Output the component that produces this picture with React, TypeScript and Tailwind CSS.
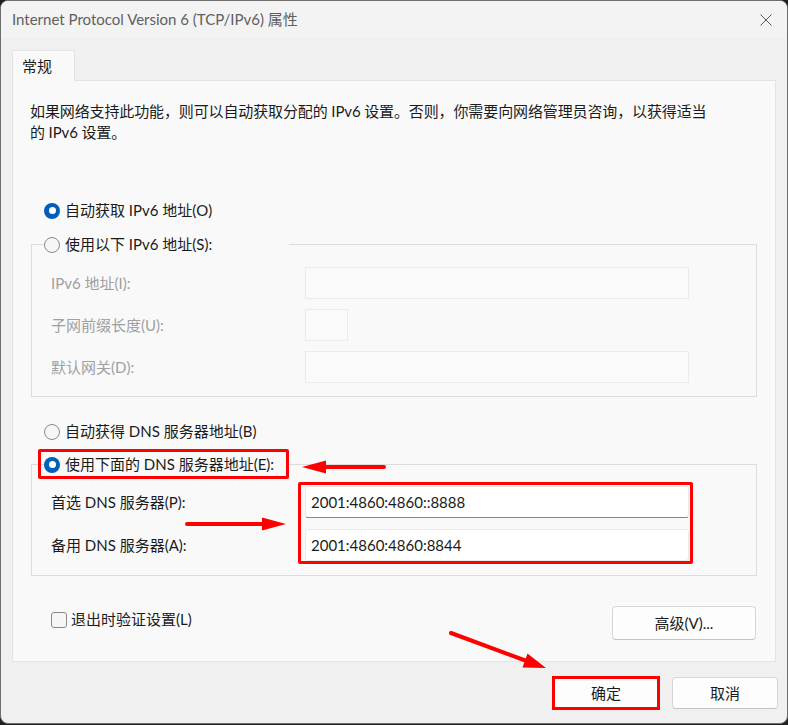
import type { ReactNode } from "react";

const FONT = {
  fontFamily: 'Lato, "Noto Sans CJK SC", sans-serif',
};

function Radio({ checked, children }: { checked?: boolean; children: ReactNode }) {
  return (
    <div className="flex h-[21px] items-center gap-[5px] text-[15px] leading-[21px] text-[#1b1b1b]">
      {checked ? (
        <span className="flex h-4 w-4 items-center justify-center rounded-full bg-[#005fb8]">
          <span className="h-[7px] w-[7px] rounded-full bg-white" />
        </span>
      ) : (
        <span className="h-4 w-4 rounded-full border border-[#8a8a8a] bg-[#f6f6f6]" />
      )}
      <span className="whitespace-nowrap">{children}</span>
    </div>
  );
}

function DisabledRow({ label, small }: { label: string; small?: boolean }) {
  return (
    <div className="flex h-[32px] items-center">
      <span className="w-[254px] whitespace-nowrap text-[15px] leading-[21px] text-[#a0a0a0]">
        {label}
      </span>
      <div
        className={
          small
            ? "h-[32px] w-[43px] border border-[#ebebeb] bg-[#fafafa]"
            : "h-[32px] w-[384px] border border-[#ebebeb] bg-[#fafafa]"
        }
      />
    </div>
  );
}

function Button({ children, wide }: { children: ReactNode; wide?: boolean }) {
  return (
    <div
      className={
        wide
          ? "flex h-[34px] w-[144px] items-center justify-center rounded-[4px] border border-[#d6d6d6] border-b-[#c4c4c4] bg-[#fdfdfd] text-[15px] text-[#1b1b1b]"
          : "flex h-[32px] w-[106px] items-center justify-center rounded-[4px] border border-[#d6d6d6] border-b-[#c4c4c4] bg-[#fdfdfd] text-[15px] text-[#1b1b1b]"
      }
    >
      {children}
    </div>
  );
}

function Arrows() {
  return (
    <svg
      className="pointer-events-none absolute left-0 top-0"
      width="788"
      height="725"
      viewBox="0 0 788 725"
    >
      <g fill="#ff0000" stroke="#ff0000" strokeLinecap="round">
        <line x1="384" y1="467" x2="320" y2="467" strokeWidth="4" />
        <polygon points="302,467 326,460.5 326,473.5" stroke="none" />
        <line x1="187" y1="524" x2="266" y2="524" strokeWidth="4" />
        <polygon points="286,524 262,517.5 262,530.5" stroke="none" />
        <line x1="451" y1="633" x2="528" y2="661.5" strokeWidth="4" />
        <polygon points="546,668 522.5,667.5 527.5,653.5" stroke="none" />
      </g>
    </svg>
  );
}

export default function App() {
  return (
    <div className="relative h-[725px] w-[788px] bg-[#202020]" style={FONT}>
      <div className="flex h-[724px] w-[788px] flex-col overflow-hidden rounded-[8px] border border-[#6e6e6e] bg-[#f0f0f0]">
        {/* title bar */}
        <div className="flex h-[37px] shrink-0 items-center justify-between bg-[#f3f3f3] pl-[11px]">
          <span className="whitespace-nowrap text-[15px] text-[#5f5f5f]">
            Internet Protocol Version 6 (TCP/IPv6) 属性
          </span>
          <div className="flex h-[37px] w-[42px] items-center justify-center">
            <svg width="12" height="12" viewBox="0 0 12 12">
              <path d="M0.5 0.5 L11.5 11.5 M11.5 0.5 L0.5 11.5" stroke="#5a5a5a" strokeWidth="1" />
            </svg>
          </div>
        </div>

        {/* tab strip */}
        <div className="mt-[12px] flex px-[11px]">
          <div className="relative z-10 -mb-px flex h-[31px] w-[63px] items-center rounded-t-[2px] border border-b-0 border-[#e3e3e3] bg-[#f9f9f9] pl-[9px] text-[15px] text-[#1b1b1b]">
            常规
          </div>
        </div>

        {/* tab panel */}
        <div className="mx-[11px] flex flex-col border border-[#e3e3e3] bg-[#f9f9f9]">
          <p className="whitespace-nowrap pl-[17px] pt-[20px] text-[15px] leading-[21px] tracking-[-0.12px] text-[#1b1b1b]">
            如果网络支持此功能，则可以自动获取分配的 IPv6 设置。否则，你需要向网络管理员咨询，以获得适当
            <br />
            的 IPv6 设置。
          </p>

          <div className="mt-[57px] pl-[31px]">
            <Radio checked>自动获取 IPv6 地址(O)</Radio>
          </div>

          <fieldset className="mx-[18px] mt-[13px] border border-[#dcdcdc] p-0">
            <legend className="ml-[12px] w-[245px] p-0">
              <Radio>使用以下 IPv6 地址(S):</Radio>
            </legend>
            <div className="flex flex-col gap-[10px] pb-[13px] pl-[19px] pt-[12px]">
              <DisabledRow label="IPv6 地址(I):" />
              <DisabledRow label="子网前缀长度(U):" small />
              <DisabledRow label="默认网关(D):" />
            </div>
          </fieldset>

          <div className="mt-[24px] pl-[31px]">
            <Radio>自动获得 DNS 服务器地址(B)</Radio>
          </div>

          <fieldset className="mx-[18px] mt-[12px] border border-[#dcdcdc] p-0">
            <legend className="relative ml-[12px] w-[245px] p-0">
              <Radio checked>使用下面的 DNS 服务器地址(E):</Radio>
              <span className="absolute -bottom-[4px] -left-[6px] -top-[5px] right-0 rounded-[2px] border-[3px] border-[#ff0000]" />
            </legend>
            <div className="flex pb-[14px] pl-[19px] pt-[11px]">
              <div className="flex w-[254px] flex-col gap-[11px] text-[15px] leading-[21px] text-[#1b1b1b]">
                <span className="flex h-[32px] items-center whitespace-nowrap">首选 DNS 服务器(P):</span>
                <span className="flex h-[32px] items-center whitespace-nowrap">备用 DNS 服务器(A):</span>
              </div>
              <div className="relative flex w-[384px] flex-col gap-[11px]">
                <div className="flex h-[32px] items-center rounded-[3px] border border-[#e8e8e8] border-b-[#868686] bg-white pl-[5px] text-[15px] text-[#1b1b1b]">
                  2001:4860:4860::8888
                </div>
                <div className="flex h-[32px] items-center rounded-[3px] border border-[#e8e8e8] bg-white pl-[5px] text-[15px] text-[#1b1b1b]">
                  2001:4860:4860:8844
                </div>
                <span className="absolute -bottom-[3px] -left-[7px] -right-[4px] -top-[4px] rounded-[2px] border-[3px] border-[#ff0000]" />
              </div>
            </div>
          </fieldset>

          <div className="mb-[21px] mt-[30px] flex items-start justify-between pl-[38px] pr-[19px]">
            <label className="mt-[3px] flex h-[21px] items-center gap-[4px] text-[15px] leading-[21px] text-[#1b1b1b]">
              <span className="h-4 w-4 rounded-[3px] border border-[#8a8a8a] bg-[#f6f6f6]" />
              <span className="whitespace-nowrap">退出时验证设置(L)</span>
            </label>
            <Button wide>高级(V)...</Button>
          </div>
        </div>

        {/* dialog buttons */}
        <div className="mt-[15px] flex justify-end gap-[13px] pr-[9px]">
          <div className="relative">
            <Button>确定</Button>
            <span className="absolute -inset-[1px] border-[3px] border-[#ff0000]" />
          </div>
          <Button>取消</Button>
        </div>
      </div>
      <Arrows />
    </div>
  );
}
